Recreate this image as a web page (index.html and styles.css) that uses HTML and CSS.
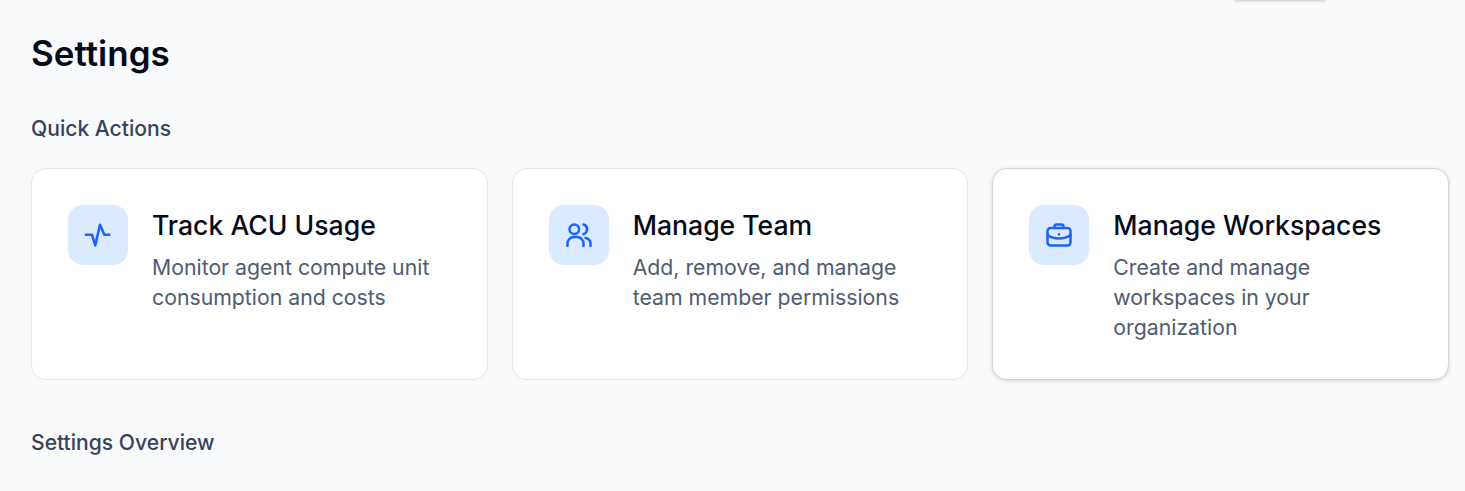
FILE: index.html
```html
<!DOCTYPE html>
<html lang="en">
<head>
  <meta charset="UTF-8">
  <meta name="viewport" content="width=device-width, initial-scale=1.0">
  <title>Settings</title>
  <link rel="stylesheet" href="styles.css">
</head>
<body>
  <div class="top-popover"></div>

  <main class="page">
    <h1 class="page-title">Settings</h1>

    <h2 class="section-title">Quick Actions</h2>
    <section class="action-list">
      <div class="action-card">
        <div class="action-icon">
          <svg viewBox="0 0 30 30" width="30" height="30" fill="none" stroke="currentColor" stroke-width="2.6" stroke-linecap="round" stroke-linejoin="round">
            <path d="M3 14.7h6l3.3 10.6L17 4.700l4.300 10h5"/>
          </svg>
        </div>
        <div class="action-text">
          <h3>Track ACU Usage</h3>
          <p>Monitor agent compute unit consumption and costs</p>
        </div>
      </div>

      <div class="action-card">
        <div class="action-icon">
          <svg viewBox="0 0 30 30" width="30" height="30" fill="none" stroke="currentColor" stroke-width="2.5" stroke-linecap="round" stroke-linejoin="round">
            <circle cx="10.3" cy="9.3" r="4.8"/>
            <path d="M3.5 26v-2.5a6.5 6.5 0 0 1 6.5-6.5h3a6.5 6.5 0 0 1 6.5 6.5V26"/>
            <path d="M19.5 4.5a5 5 0 0 1 0 9.6"/>
            <path d="M21.5 18a6 6 0 0 1 5 5.5V26"/>
          </svg>
        </div>
        <div class="action-text">
          <h3>Manage Team</h3>
          <p>Add, remove, and manage team member permissions</p>
        </div>
      </div>

      <div class="action-card action-card-hover">
        <div class="action-icon">
          <svg viewBox="0 0 30 30" width="30" height="30" fill="none" stroke="currentColor" stroke-width="2.5" stroke-linecap="round" stroke-linejoin="round">
            <rect x="3.5" y="8" width="23" height="17.5" rx="3"/>
            <path d="M10.5 8V6.5a2 2 0 0 1 2-2h5a2 2 0 0 1 2 2V8"/>
            <path d="M3.5 15c3.500 2.500 7 3.500 11.500 3.500s8-1 11.500-3.500"/>
            <path d="M15 14.300v.1"/>
          </svg>
        </div>
        <div class="action-text">
          <h3>Manage Workspaces</h3>
          <p>Create and manage workspaces in your organization</p>
        </div>
      </div>
    </section>

    <h2 class="section-title overview-title">Settings Overview</h2>
  </main>
</body>
</html>
```

FILE: styles.css
```css
html, body {
  height: 100%;
}

body {
  font-family: 'Inter', sans-serif;
  margin: 0;
  padding: 0;
  background: #f9fafb;
  color: #060b1a;
  overflow: hidden;
}

.page {
  padding: 31px 16px 0 31px;
}

.page-title {
  font-size: 35px;
  line-height: 45px;
  font-weight: 600;
  margin: 0 0 38px;
}

.section-title {
  font-size: 21.1px;
  line-height: 30px;
  font-weight: 450;
  color: #374359;
  margin: 0 0 24px;
}

.overview-title {
  margin-top: 48px;
}

.action-list {
  display: grid;
  grid-template-columns: repeat(3, 1fr);
  gap: 24px;
}

.action-card {
  display: flex;
  gap: 24px;
  height: 212px;
  box-sizing: border-box;
  padding: 36px;
  background: white;
  border: 1px solid #e5e7eb;
  border-radius: 15px;
}

.action-card-hover {
  border-color: #d1d5db;
  box-shadow: 0 1px 4px rgba(0, 0, 0, 0.15);
}

.action-icon {
  display: flex;
  align-items: center;
  justify-content: center;
  flex: none;
  width: 60px;
  height: 60px;
  background: #dbeafe;
  border-radius: 15px;
  color: #1a64ff;
}

.action-text h3 {
  font-size: 26.6px;
  line-height: 40px;
  font-weight: 450;
  margin: 0 0 7px;
}

.action-text p {
  font-size: 21.25px;
  line-height: 30px;
  color: #4f5c70;
  margin: 0;
}

.top-popover {
  position: absolute;
  top: -20px;
  left: 1233px;
  width: 94px;
  height: 20px;
  background: white;
  border-radius: 4px;
  box-shadow: 0 1px 3px rgba(0, 0, 0, 0.2);
}
```
